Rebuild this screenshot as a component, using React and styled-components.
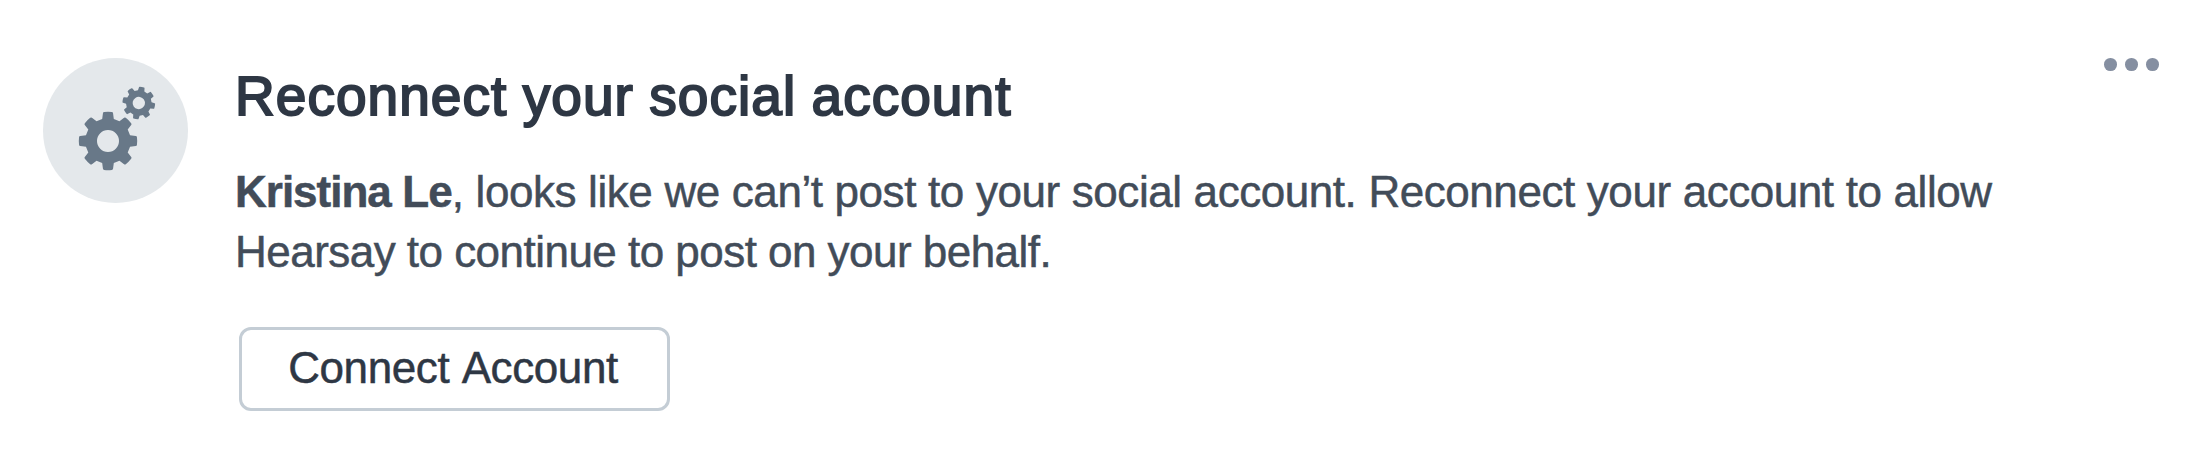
import React from 'react';
import styled, { createGlobalStyle } from 'styled-components';

const GlobalStyle = createGlobalStyle`
  * { box-sizing: border-box; }
  body {
    margin: 0;
    background: #ffffff;
    font-family: "Liberation Sans", Arial, sans-serif;
  }
`;

const Card = styled.section`
  display: flex;
  align-items: flex-start;
  width: 100%;
  height: 470px;
  padding: 58px 43px 0 43px;
  background: #ffffff;
`;

const IconBadge = styled.div`
  flex: none;
  width: 145px;
  height: 145px;
  margin-right: 47px;
  border-radius: 50%;
  background: #e4e8eb;
  color: #687888;

  svg { display: block; }
`;

const Content = styled.div`
  flex: 1;
  min-width: 0;
`;

const Title = styled.h2`
  margin: 6px 0 0;
  font-size: 55px;
  line-height: 64px;
  font-weight: 400;
  letter-spacing: 1.05px;
  word-spacing: -1px;
  color: #2e3744;
  -webkit-text-stroke: 2px #2e3744;
`;

const Message = styled.p`
  margin: 34px 0 0;
  font-size: 44px;
  line-height: 60px;
  color: #424c59;
  -webkit-text-stroke: 0.5px #424c59;
`;

const Line = styled.span`
  display: block;
  white-space: nowrap;
  letter-spacing: ${({ $tracking }) => $tracking}px;
  word-spacing: ${({ $gap = 0 }) => $gap}px;
`;

const Name = styled.strong`
  font-weight: 700;
  letter-spacing: -1px;
`;

const ConnectButton = styled.button`
  display: flex;
  align-items: center;
  justify-content: center;
  width: 431px;
  height: 84px;
  margin: 45px 0 0 4px;
  padding: 0 3px 2px 0;
  border: 3px solid #c4cdd5;
  border-radius: 12px;
  background: #ffffff;
  font: 400 44px "Liberation Sans", Arial, sans-serif;
  letter-spacing: -0.4px;
  word-spacing: 3px;
  color: #2e3744;
  -webkit-text-stroke: 0.5px #2e3744;
`;

const MenuButton = styled.button`
  display: flex;
  gap: 8.5px;
  margin: 0;
  padding: 0;
  border: 0;
  background: none;
`;

const Dot = styled.span`
  width: 12.6px;
  height: 12.6px;
  border-radius: 50%;
  background: #858fa1;
`;

const point = (r, deg) => {
  const a = (deg * Math.PI) / 180;
  return `${(r * Math.sin(a)).toFixed(2)} ${(-r * Math.cos(a)).toFixed(2)}`;
};

const gearPath = (() => {
  const parts = [];
  for (let i = 0; i < 8; i += 1) {
    const a = i * 45;
    parts.push(
      `${i ? 'L' : 'M'}${point(22.8, a - 14.8)}`,
      `L${point(28.2, a - 10.3)}`,
      `Q${point(29.3, a - 9.8)} ${point(29.2, a - 7.5)}`,
      `A29.2 29.2 0 0 1 ${point(29.2, a + 7.5)}`,
      `Q${point(29.3, a + 9.8)} ${point(28.2, a + 10.3)}`,
      `L${point(22.8, a + 14.8)}`,
    );
  }
  return `${parts.join('')}ZM0 -11A11 11 0 1 0 0 11A11 11 0 1 0 0 -11Z`;
})();

const GearsIcon = () => (
  <svg width="145" height="145" viewBox="0 0 145 145" fill="currentColor" fillRule="evenodd" aria-hidden="true">
    <path d={gearPath} transform="translate(65 83)" />
    <path d={gearPath} transform="translate(95.8 45) rotate(11) scale(0.56)" />
  </svg>
);

export default function App() {
  return (
    <>
      <GlobalStyle />
      <Card>
        <IconBadge><GearsIcon /></IconBadge>
        <Content>
          <Title>Reconnect your social account</Title>
          <Message>
            <Line $tracking={-0.45} $gap={0.3}>
              <Name>Kristina Le</Name>, looks like we can’t post to your social account. Reconnect your account to allow
            </Line>
            <Line $tracking={-0.53}>Hearsay to continue to post on your behalf.</Line>
          </Message>
          <ConnectButton type="button">Connect Account</ConnectButton>
        </Content>
        <MenuButton type="button" aria-label="More options">
          <Dot /><Dot /><Dot />
        </MenuButton>
      </Card>
    </>
  );
}
